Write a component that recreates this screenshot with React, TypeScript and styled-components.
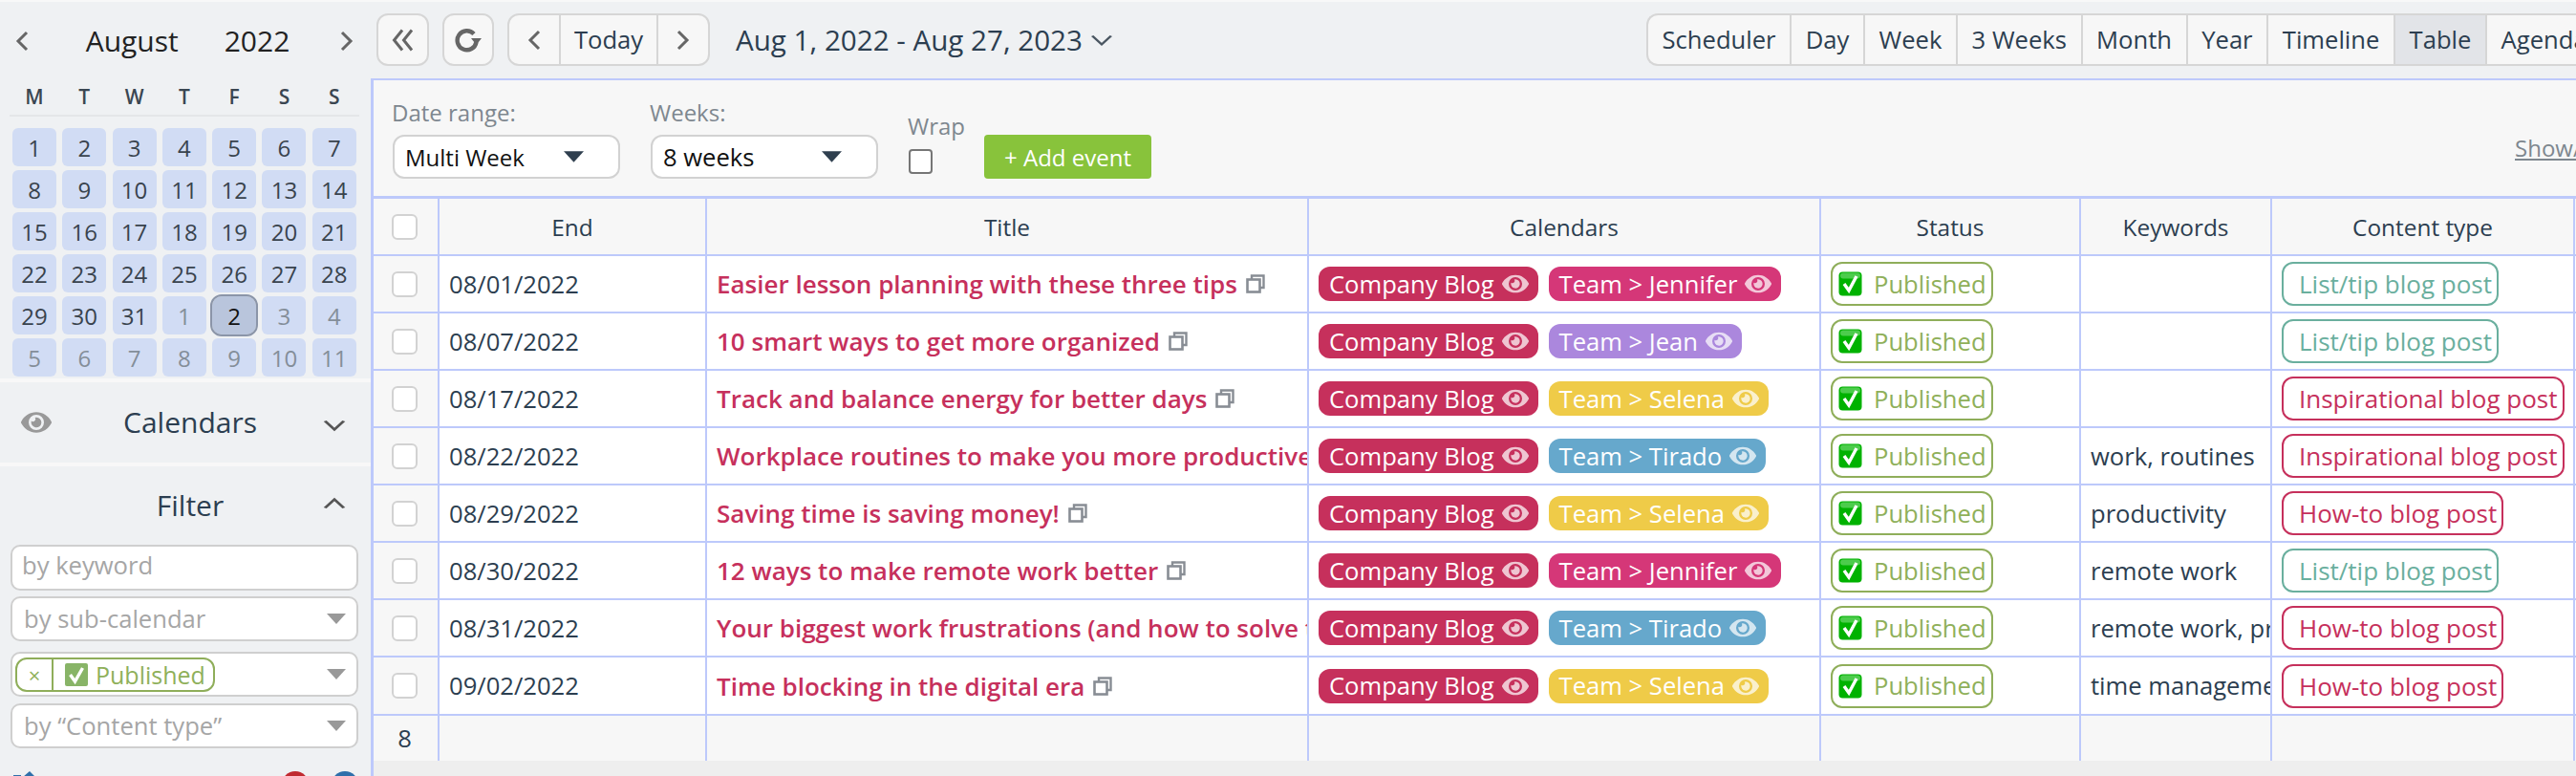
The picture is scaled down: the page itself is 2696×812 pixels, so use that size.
import styled, { createGlobalStyle } from 'styled-components';
import { FaEye } from 'react-icons/fa';

const GlobalStyle = createGlobalStyle`
  html, body {
    margin: 0;
    padding: 0;
    background: #eff1f3;
  }
  * {
    box-sizing: border-box;
  }
`;

const WEEKDAYS = ['M', 'T', 'W', 'T', 'F', 'S', 'S'];
const DAYS = [
  ...Array.from({ length: 31 }, (_, i) => ({ n: i + 1, off: false })),
  ...Array.from({ length: 11 }, (_, i) => ({ n: i + 1, off: true })),
];
const VIEWS = ['Scheduler', 'Day', 'Week', '3 Weeks', 'Month', 'Year', 'Timeline', 'Table', 'Agenda'];

type Team = 'jennifer' | 'jean' | 'selena' | 'tirado';
type Kind = 'list' | 'inspo' | 'howto';

const TEAM: Record<Team, { label: string; color: string }> = {
  jennifer: { label: 'Team > Jennifer', color: '#d53778' },
  jean: { label: 'Team > Jean', color: '#ab87dd' },
  selena: { label: 'Team > Selena', color: '#efcb48' },
  tirado: { label: 'Team > Tirado', color: '#66a8cc' },
};
const KIND: Record<Kind, { label: string; color: string }> = {
  list: { label: 'List/tip blog post', color: '#6aaf9e' },
  inspo: { label: 'Inspirational blog post', color: '#c6305c' },
  howto: { label: 'How-to blog post', color: '#c6305c' },
};

const ROWS: { end: string; title: string; team: Team; keywords: string; kind: Kind; tall?: boolean }[] = [
  { end: '08/01/2022', title: 'Easier lesson planning with these three tips', team: 'jennifer', keywords: '', kind: 'list' },
  { end: '08/07/2022', title: '10 smart ways to get more organized', team: 'jean', keywords: '', kind: 'list' },
  { end: '08/17/2022', title: 'Track and balance energy for better days', team: 'selena', keywords: '', kind: 'inspo' },
  { end: '08/22/2022', title: 'Workplace routines to make you more productive', team: 'tirado', keywords: 'work, routines', kind: 'inspo' },
  { end: '08/29/2022', title: 'Saving time is saving money!', team: 'selena', keywords: 'productivity', kind: 'howto' },
  { end: '08/30/2022', title: '12 ways to make remote work better', team: 'jennifer', keywords: 'remote work', kind: 'list' },
  { end: '08/31/2022', title: 'Your biggest work frustrations (and how to solve them)', team: 'tirado', keywords: 'remote work, productivity', kind: 'howto' },
  { end: '09/02/2022', title: 'Time blocking in the digital era', team: 'selena', keywords: 'time management', kind: 'howto', tall: true },
];

const Chevron = ({ dir, w = 14, h = 22, color = '#666', sw = 3 }: { dir: 'left' | 'right' | 'down' | 'up'; w?: number; h?: number; color?: string; sw?: number }) => {
  const pts = {
    left: '12,2 3,11 12,20',
    right: '2,2 11,11 2,20',
    down: '2,4 11,18 20,4',
    up: '2,18 11,4 20,18',
  }[dir];
  return (
    <svg width={w} height={h} viewBox={dir === 'left' || dir === 'right' ? '0 0 14 22' : '0 0 22 22'} preserveAspectRatio="none">
      <polyline points={pts} fill="none" stroke={color} strokeWidth={sw} />
    </svg>
  );
};

const Triangle = ({ color, w = 20, h = 11 }: { color: string; w?: number; h?: number }) => (
  <svg width={w} height={h} viewBox="0 0 20 11">
    <polygon points="0,0 20,0 10,11" fill={color} />
  </svg>
);

const CheckEmoji = () => (
  <svg width="25" height="26" viewBox="0 0 25 26">
    <rect x="0.5" y="0.5" width="24" height="25" rx="4" fill="#00b200" />
    <rect x="2" y="1.5" width="21" height="6" rx="3" fill="#4ccc4c" />
    <polyline points="6,13 11,20 19,5" fill="none" stroke="#fff" strokeWidth="3.4" />
  </svg>
);

const CopyIcon = () => (
  <CopyWrap width="20" height="20" viewBox="0 0 20 20">
    <path d="M6 5 V1.5 H18.5 V14 H15" fill="none" stroke="#888d94" strokeWidth="2.4" />
    <rect x="1.5" y="5.5" width="13" height="13" fill="none" stroke="#888d94" strokeWidth="2.6" />
  </CopyWrap>
);

const App = () => {
  return (
    <Page>
      <GlobalStyle />
      <Sidebar>
        <MonthHeader>
          <Chevron dir="left" />
          <MonthTitle>
            <span>August</span>
            <span>2022</span>
          </MonthTitle>
          <Chevron dir="right" />
        </MonthHeader>
        <WeekRow>
          {WEEKDAYS.map((d, i) => (
            <WeekDay key={i}>{d}</WeekDay>
          ))}
        </WeekRow>
        <DayGrid>
          {DAYS.map((d, i) => (
            <DayCell key={i} $off={d.off} $selected={d.off && d.n === 2 && i < 35}>
              {d.n}
            </DayCell>
          ))}
        </DayGrid>
        <SideSection $height={88}>
          <SideEye>
            <FaEye size={32} color="#999" />
          </SideEye>
          <SideTitle>Calendars</SideTitle>
          <SideChevron $top={38}>
            <Chevron dir="down" w={24} h={14} color="#555" sw={3.2} />
          </SideChevron>
        </SideSection>
        <SideSection $height={86}>
          <SideTitle>Filter</SideTitle>
          <SideChevron $top={32}>
            <Chevron dir="up" w={24} h={14} color="#555" sw={3.2} />
          </SideChevron>
        </SideSection>
        <FilterStack>
          <FilterInput>by keyword</FilterInput>
          <FilterSelect>
            <span>by sub-calendar</span>
            <Triangle color="#999" />
          </FilterSelect>
          <FilterSelect $gap={11}>
            <PublishedTag>
              <TagClose>×</TagClose>
              <TagBody>
                <CheckSmall>
                  <svg width="24" height="24" viewBox="0 0 24 24">
                    <rect width="24" height="24" rx="2" fill="#88b467" />
                    <polyline points="5.5,12 10.5,19 18.5,5" fill="none" stroke="#fff" strokeWidth="3.4" />
                  </svg>
                </CheckSmall>
                Published
              </TagBody>
            </PublishedTag>
            <Triangle color="#999" />
          </FilterSelect>
          <FilterSelect $gap={7}>
            <span>by “Content type”</span>
            <Triangle color="#999" />
          </FilterSelect>
        </FilterStack>
        <SideFooter>
          <ShareMark width="24" height="24" viewBox="0 0 24 24">
            <path d="M0 4 H8 V12 H0 Z M10 6 L17 0 L24 7 L17 14 Z" fill="#2f6faa" />
          </ShareMark>
          <FooterDots>
            <FooterDot $color="#c02a30" />
            <FooterDot $color="#2f6faa" />
          </FooterDots>
        </SideFooter>
      </Sidebar>

      <Content>
        <Toolbar>
          <ToolButton $width={55}>
            <svg width="24" height="24" viewBox="0 0 24 24">
              <polyline points="11,1.5 2.5,12 11,22.5" fill="none" stroke="#666" strokeWidth="3" />
              <polyline points="21,1.5 12.5,12 21,22.5" fill="none" stroke="#666" strokeWidth="3" />
            </svg>
          </ToolButton>
          <ToolButton $width={54}>
            <svg width="30" height="26" viewBox="0 0 30 26">
              <path d="M21 6.5 A10 10 0 1 0 23.5 15" fill="none" stroke="#666" strokeWidth="4.4" />
              <polygon points="18,11 29,11 23.5,18" fill="#666" />
            </svg>
          </ToolButton>
          <NavGroup>
            <NavCell $width={54}>
              <Chevron dir="left" />
            </NavCell>
            <NavCell $width={102}>Today</NavCell>
            <NavCell $width={52}>
              <Chevron dir="right" />
            </NavCell>
          </NavGroup>
          <RangeTitle>
            Aug 1, 2022 - Aug 27, 2023
            <Chevron dir="down" w={24} h={14} color="#4a5661" sw={2.6} />
          </RangeTitle>
          <ViewGroup>
            {VIEWS.map((v) => (
              <ViewTab key={v} $active={v === 'Table'}>
                {v}
              </ViewTab>
            ))}
          </ViewGroup>
        </Toolbar>

        <Panel>
          <Options>
            <OptionField>
              <OptionLabel>Date range:</OptionLabel>
              <OptionSelect $size={24}>
                Multi Week
                <Triangle color="#2f3f4f" w={21} h={12} />
              </OptionSelect>
            </OptionField>
            <OptionField>
              <OptionLabel>Weeks:</OptionLabel>
              <OptionSelect $size={25.6}>
                8 weeks
                <Triangle color="#2f3f4f" w={21} h={12} />
              </OptionSelect>
            </OptionField>
            <WrapField>
              <OptionLabel>Wrap</OptionLabel>
              <WrapBox />
            </WrapField>
            <AddButton>+ Add event</AddButton>
            <ShowLink>Show/hide columns</ShowLink>
          </Options>

          <HeaderRow>
            <CheckCell>
              <RowCheck />
            </CheckCell>
            <HeadCell>End</HeadCell>
            <HeadCell>Title</HeadCell>
            <HeadCell>Calendars</HeadCell>
            <HeadCell>Status</HeadCell>
            <HeadCell>Keywords</HeadCell>
            <HeadCell>Content type</HeadCell>
          </HeaderRow>

          {ROWS.map((r) => (
            <Row key={r.end} $tall={r.tall}>
              <CheckCell>
                <RowCheck />
              </CheckCell>
              <Cell>{r.end}</Cell>
              <Cell>
                <EventTitle>{r.title}</EventTitle>
                <CopyIcon />
              </Cell>
              <Cell $gap={11}>
                <CalendarPill $color="#c6305c">
                  Company Blog
                  <FaEye size={28} />
                </CalendarPill>
                <CalendarPill $color={TEAM[r.team].color}>
                  {TEAM[r.team].label}
                  <FaEye size={28} />
                </CalendarPill>
              </Cell>
              <Cell>
                <StatusPill>
                  <CheckEmoji />
                  Published
                </StatusPill>
              </Cell>
              <Cell>{r.keywords}</Cell>
              <Cell>
                <KindPill $color={KIND[r.kind].color}>{KIND[r.kind].label}</KindPill>
              </Cell>
            </Row>
          ))}

          <FooterRow>
            <CheckCell>8</CheckCell>
            <FooterCell />
            <FooterCell />
            <FooterCell />
            <FooterCell />
            <FooterCell />
            <FooterCell />
          </FooterRow>
        </Panel>
      </Content>
    </Page>
  );
};

const BLUE = '#bdc9fb';
const COLS = '69px 280px 630px 536px 272px 200px 317px';

const Page = styled.div`
  display: flex;
  width: 2696px;
  height: 812px;
  overflow: hidden;
  border-top: 2px solid #f8f8f8;
  background: #eff1f3;
  color: #2c3e50;
  font-family: 'Open Sans', sans-serif;
  font-size: 25.6px;
`;

const Sidebar = styled.aside`
  flex: 0 0 388px;
  display: flex;
  flex-direction: column;
  > * {
    flex: none;
  }
`;

const MonthHeader = styled.div`
  height: 80px;
  display: flex;
  align-items: center;
  justify-content: space-between;
  padding: 2px 18px 0 16px;
`;

const MonthTitle = styled.div`
  display: flex;
  gap: 48px;
  margin: -2px 0 0 7px;
  font-size: 30px;
  color: #222;
`;

const WeekRow = styled.div`
  display: grid;
  grid-template-columns: repeat(7, 46px);
  column-gap: 6.3px;
  height: 40px;
  margin: 0 12px 0 10px;
  padding-left: 3px;
  border-bottom: 2px solid #e4e6e8;
  align-items: center;
`;

const WeekDay = styled.div`
  text-align: center;
  font-size: 21px;
  font-weight: 600;
  color: #3a4651;
`;

const DayGrid = styled.div`
  display: grid;
  grid-template-columns: repeat(7, 46px);
  grid-auto-rows: 40px;
  column-gap: 6.3px;
  row-gap: 4px;
  padding: 12px 0 2px 13px;
`;

const DayCell = styled.div<{ $off: boolean; $selected: boolean }>`
  display: flex;
  align-items: center;
  justify-content: center;
  border-radius: 6px;
  font-size: 24px;
  background: ${(p) => (p.$selected ? '#b9c5dc' : '#d1dcf4')};
  color: ${(p) => (p.$selected ? '#111' : p.$off ? '#848e99' : '#39434d')};
  ${(p) => p.$selected && 'outline: 2px solid #8b95a8; outline-offset: 0; border-radius: 10px;'}
`;

const SideSection = styled.div<{ $height: number }>`
  position: relative;
  height: ${(p) => p.$height}px;
  border-top: 4px solid #f8f8f8;
  display: flex;
  align-items: center;
  justify-content: center;
  padding-left: 10px;
`;

const SideTitle = styled.div`
  font-size: 30px;
  color: #2c3e50;
  margin-top: -2px;
`;

const SideEye = styled.div`
  position: absolute;
  left: 22px;
  top: 26px;
`;

const SideChevron = styled.div<{ $top: number }>`
  position: absolute;
  left: 338px;
  top: ${(p) => p.$top}px;
  line-height: 0;
`;

const FilterStack = styled.div`
  display: flex;
  flex-direction: column;
  padding: 0 13px 0 11px;
`;

const FilterInput = styled.div`
  height: 48px;
  background: #fff;
  border: 2px solid #cfcfcf;
  border-radius: 10px;
  padding: 0 10px;
  line-height: 40px;
  color: #a6a6a6;
`;

const FilterSelect = styled.div<{ $gap?: number }>`
  height: 47px;
  margin-top: ${(p) => p.$gap ?? 6}px;
  background: #fff;
  border: 2px solid #cfcfcf;
  border-radius: 10px;
  padding: 0 11px 0 12px;
  display: flex;
  align-items: center;
  justify-content: space-between;
  color: #a6a6a6;
`;

const PublishedTag = styled.div`
  display: flex;
  align-items: stretch;
  height: 36px;
  margin-left: -9px;
  border: 2px solid #8fae5a;
  border-radius: 12px;
  color: #8fb05a;
`;

const TagClose = styled.div`
  width: 38px;
  display: flex;
  align-items: center;
  justify-content: center;
  border-right: 2px solid #8fae5a;
  font-size: 22px;
`;

const TagBody = styled.div`
  display: flex;
  align-items: center;
  gap: 8px;
  padding: 0 8px 0 12px;
  font-size: 25px;
`;

const CheckSmall = styled.span`
  line-height: 0;
`;

const SideFooter = styled.div`
  display: flex;
  justify-content: space-between;
  margin-top: 24px;
  padding: 0 13px 0 14px;
`;

const ShareMark = styled.svg`
  flex: none;
`;

const FooterDots = styled.div`
  display: flex;
  gap: 24px;
`;

const FooterDot = styled.div<{ $color: string }>`
  width: 28px;
  height: 28px;
  border-radius: 50%;
  background: ${(p) => p.$color};
`;

const Content = styled.main`
  flex: 1;
  min-width: 0;
  display: flex;
  flex-direction: column;
`;

const Toolbar = styled.div`
  height: 80px;
  flex: none;
  display: flex;
  align-items: flex-start;
  padding: 12px 0 0 6px;
`;

const ToolButton = styled.div<{ $width: number }>`
  width: ${(p) => p.$width}px;
  height: 55px;
  margin-right: 14px;
  flex: none;
  display: flex;
  align-items: center;
  justify-content: center;
  background: #f7f7f7;
  border: 2px solid #d6d6d6;
  border-radius: 12px;
`;

const NavGroup = styled.div`
  display: flex;
  height: 55px;
  flex: none;
  background: #f7f7f7;
  border: 2px solid #d6d6d6;
  border-radius: 12px;
`;

const NavCell = styled.div<{ $width: number }>`
  width: ${(p) => p.$width}px;
  display: flex;
  align-items: center;
  justify-content: center;
  border-right: 2px solid #d6d6d6;
  &:last-child {
    border-right: none;
  }
`;

const RangeTitle = styled.div`
  display: flex;
  align-items: center;
  gap: 8px;
  flex: none;
  height: 55px;
  margin-left: 27px;
  font-size: 29.6px;
  white-space: nowrap;
`;

const ViewGroup = styled.div`
  display: flex;
  height: 55px;
  flex: none;
  margin-left: 558px;
  background: #f7f7f7;
  border: 2px solid #d6d6d6;
  border-right: none;
  border-radius: 12px 0 0 12px;
`;

const ViewTab = styled.div<{ $active: boolean }>`
  display: flex;
  align-items: center;
  padding: 0 14.6px;
  white-space: nowrap;
  border-right: 2px solid #d6d6d6;
  background: ${(p) => (p.$active ? '#e2e4e8' : 'transparent')};
`;

const Panel = styled.div`
  flex: 1;
  border-left: 3px solid ${BLUE};
  border-top: 2px solid ${BLUE};
  background: #eeeeee;
`;

const Options = styled.div`
  height: 121px;
  display: flex;
  align-items: flex-end;
  padding: 0 0 18px 20px;
  background: #f7f7f7;
`;

const OptionField = styled.div`
  width: 238px;
  margin-right: 32px;
  flex: none;
`;

const OptionLabel = styled.div`
  margin: 0 0 7px -1px;
  font-size: 24px;
  color: #7e878f;
  white-space: nowrap;
`;

const OptionSelect = styled.div<{ $size: number }>`
  height: 46px;
  display: flex;
  align-items: center;
  justify-content: space-between;
  padding: 0 36px 0 11px;
  background: #fff;
  border: 2px solid #d2d2d2;
  border-radius: 12px;
  font-size: ${(p) => p.$size}px;
  color: #111;
`;

const WrapField = styled.div`
  flex: none;
  width: 79px;
  padding-bottom: 5px;
`;

const WrapBox = styled.div`
  width: 25px;
  height: 26px;
  margin-top: 8px;
  background: #fff;
  border: 2px solid #767676;
  border-radius: 4px;
`;

const AddButton = styled.div`
  width: 175px;
  height: 46px;
  flex: none;
  display: flex;
  align-items: center;
  justify-content: center;
  background: #88c33b;
  border-radius: 4px;
  font-size: 24px;
  color: #fff;
`;

const ShowLink = styled.div`
  width: 64px;
  flex: none;
  margin-left: auto;
  margin-bottom: 16px;
  white-space: nowrap;
  font-size: 24px;
  color: #7e878f;
  text-decoration: underline;
`;

const HeaderRow = styled.div`
  display: grid;
  grid-template-columns: ${COLS};
  height: 63px;
  border-top: 3px solid ${BLUE};
  border-bottom: 2px solid ${BLUE};
  background: #f7f7f7;
  font-size: 24.4px;
`;

const Row = styled.div<{ $tall?: boolean }>`
  display: grid;
  grid-template-columns: ${COLS};
  height: ${(p) => (p.$tall ? 61 : 60)}px;
  border-bottom: 2px solid ${BLUE};
  background: #fff;
`;

const FooterRow = styled.div`
  display: grid;
  grid-template-columns: ${COLS};
  height: 47px;
  background: #f7f7f7;
`;

const CheckCell = styled.div`
  display: flex;
  align-items: center;
  justify-content: center;
  padding-right: 2px;
  background: #f7f7f7;
  border-right: 2px solid ${BLUE};
`;

const RowCheck = styled.div`
  width: 27px;
  height: 27px;
  background: #fff;
  border: 2px solid #d2d2d2;
  border-radius: 6px;
`;

const HeadCell = styled.div`
  display: flex;
  align-items: center;
  justify-content: center;
  border-right: 2px solid ${BLUE};
`;

const Cell = styled.div<{ $gap?: number }>`
  display: flex;
  align-items: center;
  gap: ${(p) => p.$gap ?? 0}px;
  padding-left: 10px;
  overflow: hidden;
  white-space: nowrap;
  border-right: 2px solid ${BLUE};
`;

const FooterCell = styled.div`
  border-right: 2px solid ${BLUE};
`;

const EventTitle = styled.span`
  flex: none;
  font-size: 26px;
  font-weight: 600;
  color: #c6305c;
`;

const CopyWrap = styled.svg`
  flex: none;
  margin-left: 9px;
`;

const CalendarPill = styled.div<{ $color: string }>`
  flex: none;
  height: 36px;
  display: flex;
  align-items: center;
  gap: 8px;
  padding: 0 10px 0 11px;
  border-radius: 12px;
  background: ${(p) => p.$color};
  color: #fff;
  svg {
    opacity: 0.72;
  }
`;

const StatusPill = styled.div`
  flex: none;
  height: 46px;
  width: 170px;
  display: flex;
  align-items: center;
  gap: 12px;
  padding-left: 6px;
  border: 2px solid #8fae5a;
  border-radius: 12px;
  color: #8fb05a;
`;

const KindPill = styled.div<{ $color: string }>`
  flex: none;
  height: 46px;
  display: flex;
  align-items: center;
  padding: 0 5px 0 16px;
  border: 2px solid ${(p) => p.$color};
  border-radius: 12px;
  font-size: 26px;
  color: ${(p) => p.$color};
`;

export default App;
